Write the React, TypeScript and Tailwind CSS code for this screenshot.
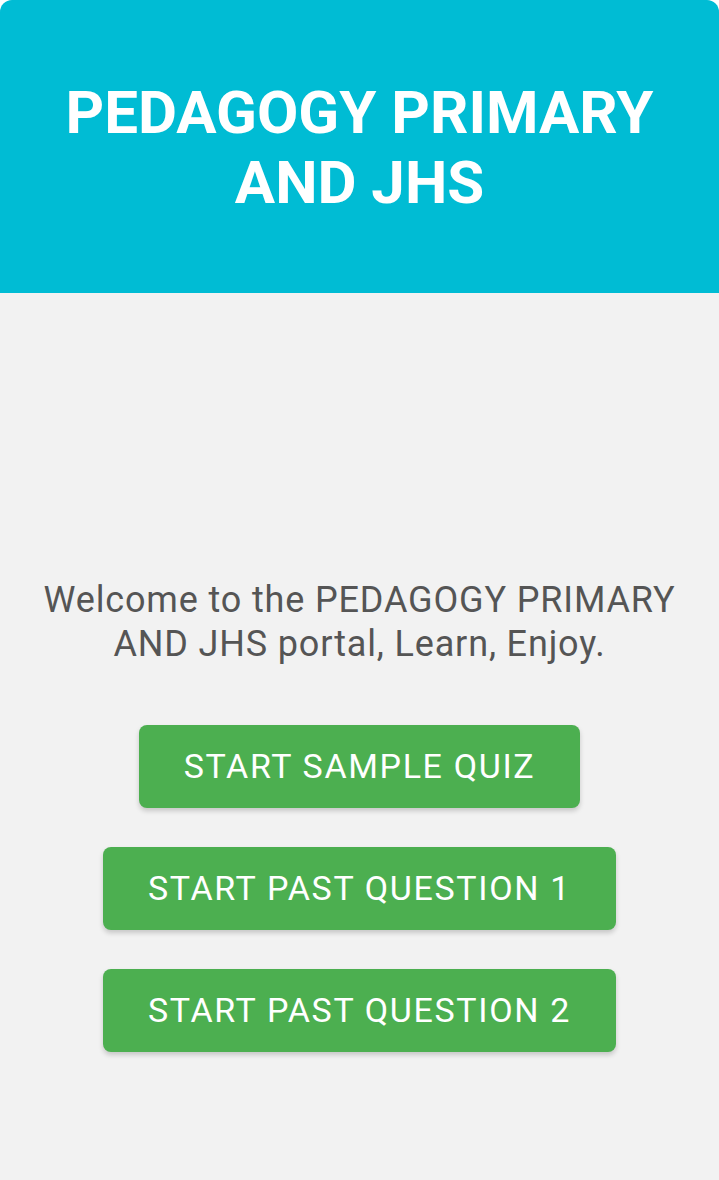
export default function App() {
  const buttons = ["START SAMPLE QUIZ", "START PAST QUESTION 1", "START PAST QUESTION 2"];

  return (
    <div className="min-h-[1180px] bg-white font-['Roboto',sans-serif]">
      {/* Header */}
      <div className="h-[293px] bg-[#00bcd4] rounded-t-[12px] flex items-center justify-center px-8">
        <h1 className="text-white font-bold text-[60px] leading-[70px] text-center pt-[2px]">
          PEDAGOGY PRIMARY AND JHS
        </h1>
      </div>

      {/* Body */}
      <div className="min-h-[887px] bg-[#f2f2f2] flex flex-col items-center pt-[285px] px-8">
        <p className="text-[#555555] text-[36px] leading-[44px] tracking-[0.85px] text-center max-w-[650px]">
          Welcome to the PEDAGOGY PRIMARY AND JHS portal, Learn, Enjoy.
        </p>

        <div className="flex flex-col items-center gap-[39px] mt-[59px]">
          {buttons.map((label) => (
            <button
              key={label}
              className="h-[83px] px-[45px] bg-[#4caf50] text-white text-[34px] tracking-[1.65px] rounded-[8px] shadow-[0_3px_5px_rgba(0,0,0,0.18)]"
            >
              {label}
            </button>
          ))}
        </div>
      </div>
    </div>
  );
}
